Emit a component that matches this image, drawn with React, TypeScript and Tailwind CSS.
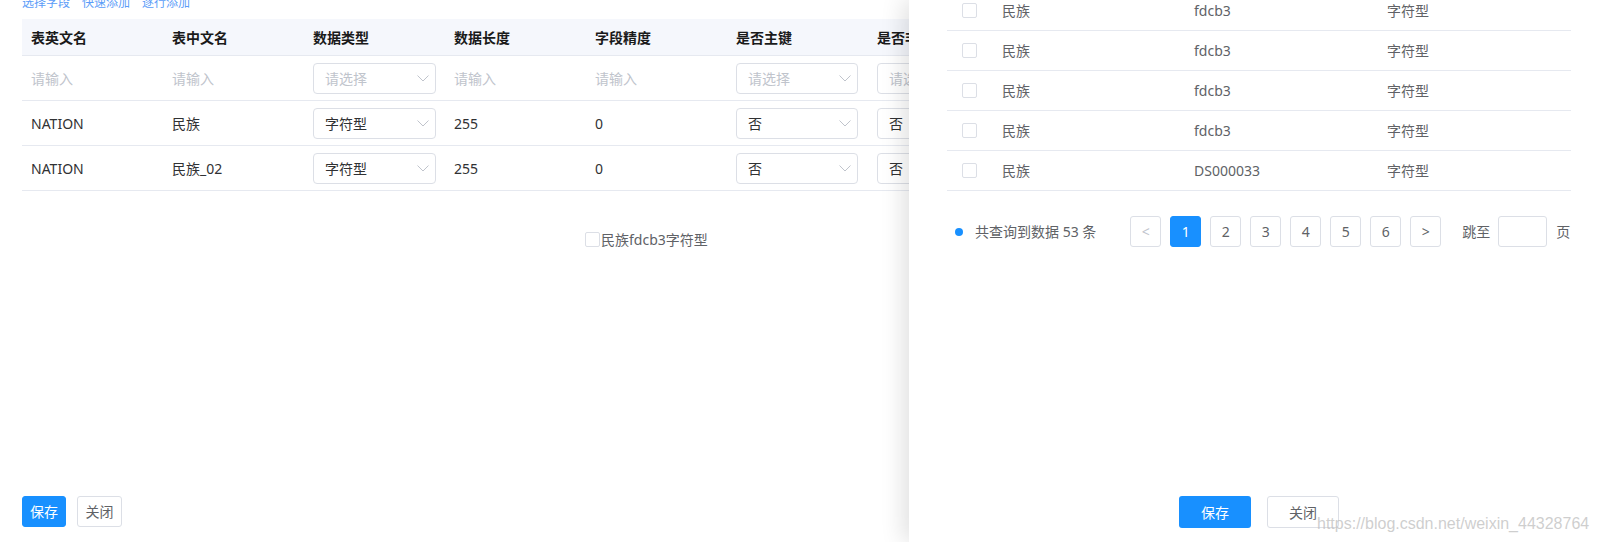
import React from "react";

const font = { fontFamily: '"Noto Sans", "Noto Sans CJK SC", sans-serif' };

function Chevron() {
  return (
    <svg width="12" height="7" viewBox="0 0 12 7" fill="none">
      <path d="M0.5 0.5 L6 6 L11.5 0.5" stroke="#c0c4cc" strokeWidth="1" />
    </svg>
  );
}

function Select({ value, placeholder, w = "w-[123px]" }: { value?: string; placeholder?: string; w?: string }) {
  return (
    <div className={`${w} h-[31px] border border-[#dcdfe6] rounded-[4px] bg-white flex items-center justify-between pl-[11px] pr-[6px] shrink-0`}>
      <span className={value ? "text-[#303133]" : "text-[#c0c4cc]"}>{value ?? placeholder}</span>
      <Chevron />
    </div>
  );
}

const headers = ["表英文名", "表中文名", "数据类型", "数据长度", "字段精度", "是否主键", "是否非空"];

type Cell = { t: "text" | "ph" | "sel"; v?: string };

const rows: Cell[][] = [
  [
    { t: "ph", v: "请输入" },
    { t: "ph", v: "请输入" },
    { t: "sel" },
    { t: "ph", v: "请输入" },
    { t: "ph", v: "请输入" },
    { t: "sel" },
    { t: "sel" },
  ],
  [
    { t: "text", v: "NATION" },
    { t: "text", v: "民族" },
    { t: "sel", v: "字符型" },
    { t: "text", v: "255" },
    { t: "text", v: "0" },
    { t: "sel", v: "否" },
    { t: "sel", v: "否" },
  ],
  [
    { t: "text", v: "NATION" },
    { t: "text", v: "民族_02" },
    { t: "sel", v: "字符型" },
    { t: "text", v: "255" },
    { t: "text", v: "0" },
    { t: "sel", v: "否" },
    { t: "sel", v: "否" },
  ],
];

const drawerRows = [
  ["民族", "fdcb3", "字符型"],
  ["民族", "fdcb3", "字符型"],
  ["民族", "fdcb3", "字符型"],
  ["民族", "fdcb3", "字符型"],
  ["民族", "DS000033", "字符型"],
];

function Box() {
  return <div className="w-[15px] h-[15px] border border-[#dcdfe6] rounded-[2px] bg-white shrink-0" />;
}

function PageBtn({ children, active, disabled }: { children: React.ReactNode; active?: boolean; disabled?: boolean }) {
  return (
    <div
      className={`w-[31px] h-[31px] rounded-[3px] flex items-center justify-center text-[14px] ${
        active
          ? "bg-[#1890ff] border border-[#1890ff] text-white"
          : `border border-[#dcdfe6] bg-white ${disabled ? "text-[#c0c4cc]" : "text-[#606266]"}`
      }`}
    >
      {children}
    </div>
  );
}

export default function App() {
  return (
    <div className="relative w-[1598px] h-[542px] overflow-hidden bg-white text-[14px]" style={font}>
      {/* Left content */}
      <div className="flex flex-col h-full pl-[22px]">
        <div className="-mt-[5px] h-4 flex gap-[12px] text-[12px] leading-4 text-[#5a9cf8] mb-[8px]">
          <span>选择字段</span>
          <span>快速添加</span>
          <span>逐行添加</span>
        </div>
        <div className="w-[1128px]">
          <div className="grid grid-cols-[repeat(8,141px)] h-[37px] bg-[#f5f7fc] border-b border-[#e6e9f0] items-center font-bold text-[#1a1a1a]">
            {headers.map((h) => (
              <div key={h} className="pl-[9px]">{h}</div>
            ))}
          </div>
          {rows.map((r, i) => (
            <div key={i} className="grid grid-cols-[repeat(8,141px)] h-[45px] border-b border-[#e6e9f0] items-center">
              {r.map((c, j) => (
                <div key={j} className="pl-[9px]">
                  {c.t === "sel" ? (
                    <Select value={c.v} placeholder="请选择" w={j === 2 ? "w-[123px]" : "w-[122px]"} />
                  ) : c.t === "ph" ? (
                    <span className="text-[#c0c4cc]">{c.v}</span>
                  ) : (
                    <span className="text-[#303133]">{c.v}</span>
                  )}
                </div>
              ))}
            </div>
          ))}
        </div>
        <div className="mt-[38px] h-[20px] flex items-center ml-[563px] text-[#606266]">
          <Box />
          <span className="ml-[1px]">民族fdcb3字符型</span>
        </div>
        <div className="mt-auto pb-[15px] flex gap-[11px]">
          <button className="h-[31px] px-[7px] rounded-[3px] bg-[#1890ff] border border-[#1890ff] text-white">保存</button>
          <button className="h-[31px] px-[7px] w-[45px] rounded-[3px] bg-white border border-[#dcdfe6] text-[#606266]">关闭</button>
        </div>
      </div>

      {/* Drawer */}
      <div className="absolute top-0 bottom-0 left-[909px] right-0 bg-white shadow-[-6px_0_22px_rgba(0,0,0,0.12)] flex flex-col">
        <div className="-mt-[9px] ml-[38px] w-[624px]">
          {drawerRows.map((r, i) => (
            <div key={i} className="grid grid-cols-[55px_192px_193px_1fr] h-[40px] border-b border-[#e6e9f0] items-center text-[#606266] leading-5">
              <div className="pl-[15px]"><Box /></div>
              <div>{r[0]}</div>
              <div>{r[1]}</div>
              <div>{r[2]}</div>
            </div>
          ))}
        </div>
        <div className="mt-[25px] pl-[46px] flex items-center text-[#606266]">
          <div className="w-[8px] h-[8px] rounded-full bg-[#1890ff]" />
          <span className="ml-[12px]">共查询到数据 53 条</span>
          <div className="ml-[34px] flex gap-[9px]">
            <PageBtn disabled>&lt;</PageBtn>
            <PageBtn active>1</PageBtn>
            <PageBtn>2</PageBtn>
            <PageBtn>3</PageBtn>
            <PageBtn>4</PageBtn>
            <PageBtn>5</PageBtn>
            <PageBtn>6</PageBtn>
            <PageBtn>&gt;</PageBtn>
          </div>
          <span className="ml-[21px]">跳至</span>
          <div className="ml-[8px] w-[49px] h-[31px] border border-[#dcdfe6] rounded-[3px]" />
          <span className="ml-[9px]">页</span>
        </div>
        <div className="mt-auto pb-[14px] flex justify-center gap-[16px] pl-[11px]">
          <button className="w-[72px] h-[32px] rounded-[3px] bg-[#1890ff] text-white">保存</button>
          <button className="w-[72px] h-[32px] rounded-[3px] bg-white border border-[#dcdfe6] text-[#606266]">关闭</button>
        </div>
      </div>

      {/* Watermark */}
      <div
        className="absolute left-[1317px] top-[516px] text-[16px] leading-4 text-[rgba(190,190,190,0.75)] pointer-events-none whitespace-nowrap"
        style={{ fontFamily: '"Liberation Sans", Arial, sans-serif' }}
      >
        https://blog.csdn.net/weixin_44328764
      </div>
    </div>
  );
}
